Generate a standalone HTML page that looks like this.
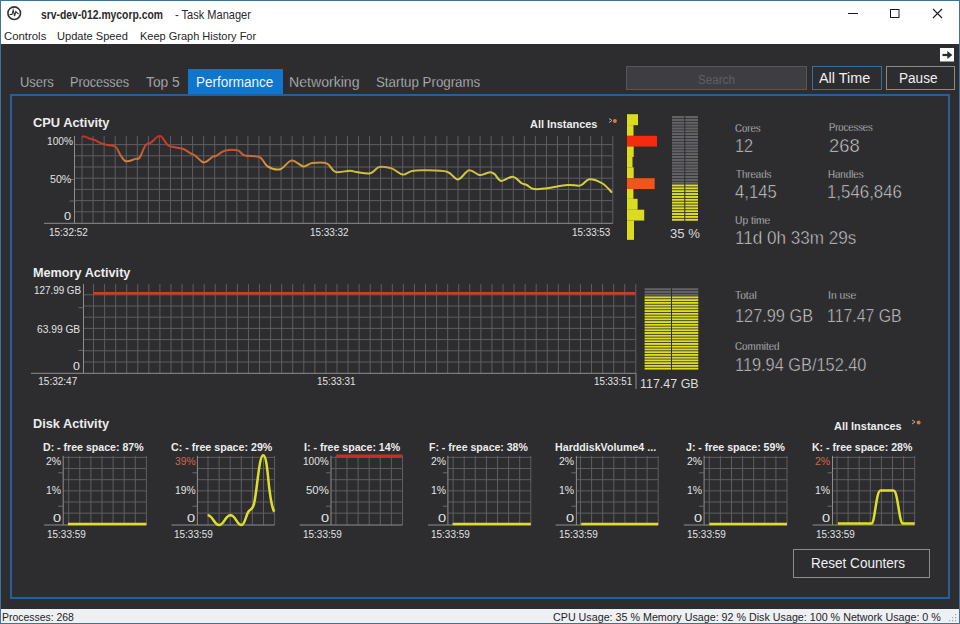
<!DOCTYPE html>
<html><head><meta charset="utf-8"><style>
html,body{margin:0;padding:0;width:960px;height:624px;overflow:hidden;background:#2d2d30;}
.t{position:absolute;white-space:pre;font-family:"Liberation Sans", sans-serif;transform-origin:0 0;}
.abs{position:absolute;}
</style></head><body>
<div class="abs" style="left:0;top:0;width:960px;height:44px;background:#ffffff"></div>
<div class="abs" style="left:0;top:609px;width:960px;height:15px;background:#eef0f3"></div>
<div class="abs" style="left:188px;top:68.5px;width:94.5px;height:27px;background:#0e76cc"></div>
<div class="abs" style="left:10px;top:94px;width:936px;height:501px;border:2px solid #23609c"></div>
<div class="abs" style="left:625.5px;top:65.5px;width:179.5px;height:22px;background:#3e3e42;border:1px solid #58585c"></div>
<div class="abs" style="left:812px;top:66px;width:68px;height:22px;border:1px solid #3b6d9a"></div>
<div class="abs" style="left:886px;top:66px;width:67px;height:22px;border:1px solid #8a8a8a"></div>
<div class="abs" style="left:792.5px;top:549px;width:135.5px;height:27px;border:1px solid #8c8c8c"></div>
<div class="abs" style="left:0;top:0;width:958px;height:622px;border:1px solid #40729c"></div>
<svg width="960" height="624" style="position:absolute;left:0;top:0">
<line x1="612.80" y1="136.00" x2="612.80" y2="223.30" stroke="#5e5e62" stroke-width="1"/><line x1="601.74" y1="136.00" x2="601.74" y2="223.30" stroke="#5e5e62" stroke-width="1"/><line x1="590.68" y1="136.00" x2="590.68" y2="223.30" stroke="#5e5e62" stroke-width="1"/><line x1="579.63" y1="136.00" x2="579.63" y2="223.30" stroke="#5e5e62" stroke-width="1"/><line x1="568.57" y1="136.00" x2="568.57" y2="223.30" stroke="#5e5e62" stroke-width="1"/><line x1="557.51" y1="136.00" x2="557.51" y2="223.30" stroke="#5e5e62" stroke-width="1"/><line x1="546.45" y1="136.00" x2="546.45" y2="223.30" stroke="#5e5e62" stroke-width="1"/><line x1="535.39" y1="136.00" x2="535.39" y2="223.30" stroke="#5e5e62" stroke-width="1"/><line x1="524.34" y1="136.00" x2="524.34" y2="223.30" stroke="#5e5e62" stroke-width="1"/><line x1="513.28" y1="136.00" x2="513.28" y2="223.30" stroke="#5e5e62" stroke-width="1"/><line x1="502.22" y1="136.00" x2="502.22" y2="223.30" stroke="#5e5e62" stroke-width="1"/><line x1="491.16" y1="136.00" x2="491.16" y2="223.30" stroke="#5e5e62" stroke-width="1"/><line x1="480.10" y1="136.00" x2="480.10" y2="223.30" stroke="#5e5e62" stroke-width="1"/><line x1="469.05" y1="136.00" x2="469.05" y2="223.30" stroke="#5e5e62" stroke-width="1"/><line x1="457.99" y1="136.00" x2="457.99" y2="223.30" stroke="#5e5e62" stroke-width="1"/><line x1="446.93" y1="136.00" x2="446.93" y2="223.30" stroke="#5e5e62" stroke-width="1"/><line x1="435.87" y1="136.00" x2="435.87" y2="223.30" stroke="#5e5e62" stroke-width="1"/><line x1="424.81" y1="136.00" x2="424.81" y2="223.30" stroke="#5e5e62" stroke-width="1"/><line x1="413.76" y1="136.00" x2="413.76" y2="223.30" stroke="#5e5e62" stroke-width="1"/><line x1="402.70" y1="136.00" x2="402.70" y2="223.30" stroke="#5e5e62" stroke-width="1"/><line x1="391.64" y1="136.00" x2="391.64" y2="223.30" stroke="#5e5e62" stroke-width="1"/><line x1="380.58" y1="136.00" x2="380.58" y2="223.30" stroke="#5e5e62" stroke-width="1"/><line x1="369.52" y1="136.00" x2="369.52" y2="223.30" stroke="#5e5e62" stroke-width="1"/><line x1="358.47" y1="136.00" x2="358.47" y2="223.30" stroke="#5e5e62" stroke-width="1"/><line x1="347.41" y1="136.00" x2="347.41" y2="223.30" stroke="#5e5e62" stroke-width="1"/><line x1="336.35" y1="136.00" x2="336.35" y2="223.30" stroke="#5e5e62" stroke-width="1"/><line x1="325.29" y1="136.00" x2="325.29" y2="223.30" stroke="#5e5e62" stroke-width="1"/><line x1="314.23" y1="136.00" x2="314.23" y2="223.30" stroke="#5e5e62" stroke-width="1"/><line x1="303.18" y1="136.00" x2="303.18" y2="223.30" stroke="#5e5e62" stroke-width="1"/><line x1="292.12" y1="136.00" x2="292.12" y2="223.30" stroke="#5e5e62" stroke-width="1"/><line x1="281.06" y1="136.00" x2="281.06" y2="223.30" stroke="#5e5e62" stroke-width="1"/><line x1="270.00" y1="136.00" x2="270.00" y2="223.30" stroke="#5e5e62" stroke-width="1"/><line x1="258.94" y1="136.00" x2="258.94" y2="223.30" stroke="#5e5e62" stroke-width="1"/><line x1="247.89" y1="136.00" x2="247.89" y2="223.30" stroke="#5e5e62" stroke-width="1"/><line x1="236.83" y1="136.00" x2="236.83" y2="223.30" stroke="#5e5e62" stroke-width="1"/><line x1="225.77" y1="136.00" x2="225.77" y2="223.30" stroke="#5e5e62" stroke-width="1"/><line x1="214.71" y1="136.00" x2="214.71" y2="223.30" stroke="#5e5e62" stroke-width="1"/><line x1="203.65" y1="136.00" x2="203.65" y2="223.30" stroke="#5e5e62" stroke-width="1"/><line x1="192.60" y1="136.00" x2="192.60" y2="223.30" stroke="#5e5e62" stroke-width="1"/><line x1="181.54" y1="136.00" x2="181.54" y2="223.30" stroke="#5e5e62" stroke-width="1"/><line x1="170.48" y1="136.00" x2="170.48" y2="223.30" stroke="#5e5e62" stroke-width="1"/><line x1="159.42" y1="136.00" x2="159.42" y2="223.30" stroke="#5e5e62" stroke-width="1"/><line x1="148.36" y1="136.00" x2="148.36" y2="223.30" stroke="#5e5e62" stroke-width="1"/><line x1="137.31" y1="136.00" x2="137.31" y2="223.30" stroke="#5e5e62" stroke-width="1"/><line x1="126.25" y1="136.00" x2="126.25" y2="223.30" stroke="#5e5e62" stroke-width="1"/><line x1="115.19" y1="136.00" x2="115.19" y2="223.30" stroke="#5e5e62" stroke-width="1"/><line x1="104.13" y1="136.00" x2="104.13" y2="223.30" stroke="#5e5e62" stroke-width="1"/><line x1="93.07" y1="136.00" x2="93.07" y2="223.30" stroke="#5e5e62" stroke-width="1"/><line x1="82.02" y1="136.00" x2="82.02" y2="223.30" stroke="#5e5e62" stroke-width="1"/><line x1="74.50" y1="211.80" x2="612.80" y2="211.80" stroke="#5e5e62" stroke-width="1"/><line x1="74.50" y1="200.60" x2="612.80" y2="200.60" stroke="#5e5e62" stroke-width="1"/><line x1="74.50" y1="189.40" x2="612.80" y2="189.40" stroke="#5e5e62" stroke-width="1"/><line x1="74.50" y1="178.20" x2="612.80" y2="178.20" stroke="#5e5e62" stroke-width="1"/><line x1="74.50" y1="167.00" x2="612.80" y2="167.00" stroke="#5e5e62" stroke-width="1"/><line x1="74.50" y1="155.80" x2="612.80" y2="155.80" stroke="#5e5e62" stroke-width="1"/><line x1="74.50" y1="144.60" x2="612.80" y2="144.60" stroke="#5e5e62" stroke-width="1"/><line x1="74.50" y1="136.00" x2="74.50" y2="223.30" stroke="#8e8e8e" stroke-width="1"/><line x1="44.00" y1="223.30" x2="612.80" y2="223.30" stroke="#8e8e8e" stroke-width="1"/><line x1="69.50" y1="179.50" x2="74.50" y2="179.50" stroke="#6a6a6a" stroke-width="1"/><line x1="69.50" y1="201.00" x2="74.50" y2="201.00" stroke="#6a6a6a" stroke-width="1"/><line x1="635.80" y1="284.00" x2="635.80" y2="373.30" stroke="#5e5e62" stroke-width="1"/><line x1="624.73" y1="284.00" x2="624.73" y2="373.30" stroke="#5e5e62" stroke-width="1"/><line x1="613.67" y1="284.00" x2="613.67" y2="373.30" stroke="#5e5e62" stroke-width="1"/><line x1="602.60" y1="284.00" x2="602.60" y2="373.30" stroke="#5e5e62" stroke-width="1"/><line x1="591.53" y1="284.00" x2="591.53" y2="373.30" stroke="#5e5e62" stroke-width="1"/><line x1="580.46" y1="284.00" x2="580.46" y2="373.30" stroke="#5e5e62" stroke-width="1"/><line x1="569.40" y1="284.00" x2="569.40" y2="373.30" stroke="#5e5e62" stroke-width="1"/><line x1="558.33" y1="284.00" x2="558.33" y2="373.30" stroke="#5e5e62" stroke-width="1"/><line x1="547.26" y1="284.00" x2="547.26" y2="373.30" stroke="#5e5e62" stroke-width="1"/><line x1="536.20" y1="284.00" x2="536.20" y2="373.30" stroke="#5e5e62" stroke-width="1"/><line x1="525.13" y1="284.00" x2="525.13" y2="373.30" stroke="#5e5e62" stroke-width="1"/><line x1="514.06" y1="284.00" x2="514.06" y2="373.30" stroke="#5e5e62" stroke-width="1"/><line x1="503.00" y1="284.00" x2="503.00" y2="373.30" stroke="#5e5e62" stroke-width="1"/><line x1="491.93" y1="284.00" x2="491.93" y2="373.30" stroke="#5e5e62" stroke-width="1"/><line x1="480.86" y1="284.00" x2="480.86" y2="373.30" stroke="#5e5e62" stroke-width="1"/><line x1="469.79" y1="284.00" x2="469.79" y2="373.30" stroke="#5e5e62" stroke-width="1"/><line x1="458.73" y1="284.00" x2="458.73" y2="373.30" stroke="#5e5e62" stroke-width="1"/><line x1="447.66" y1="284.00" x2="447.66" y2="373.30" stroke="#5e5e62" stroke-width="1"/><line x1="436.59" y1="284.00" x2="436.59" y2="373.30" stroke="#5e5e62" stroke-width="1"/><line x1="425.53" y1="284.00" x2="425.53" y2="373.30" stroke="#5e5e62" stroke-width="1"/><line x1="414.46" y1="284.00" x2="414.46" y2="373.30" stroke="#5e5e62" stroke-width="1"/><line x1="403.39" y1="284.00" x2="403.39" y2="373.30" stroke="#5e5e62" stroke-width="1"/><line x1="392.33" y1="284.00" x2="392.33" y2="373.30" stroke="#5e5e62" stroke-width="1"/><line x1="381.26" y1="284.00" x2="381.26" y2="373.30" stroke="#5e5e62" stroke-width="1"/><line x1="370.19" y1="284.00" x2="370.19" y2="373.30" stroke="#5e5e62" stroke-width="1"/><line x1="359.12" y1="284.00" x2="359.12" y2="373.30" stroke="#5e5e62" stroke-width="1"/><line x1="348.06" y1="284.00" x2="348.06" y2="373.30" stroke="#5e5e62" stroke-width="1"/><line x1="336.99" y1="284.00" x2="336.99" y2="373.30" stroke="#5e5e62" stroke-width="1"/><line x1="325.92" y1="284.00" x2="325.92" y2="373.30" stroke="#5e5e62" stroke-width="1"/><line x1="314.86" y1="284.00" x2="314.86" y2="373.30" stroke="#5e5e62" stroke-width="1"/><line x1="303.79" y1="284.00" x2="303.79" y2="373.30" stroke="#5e5e62" stroke-width="1"/><line x1="292.72" y1="284.00" x2="292.72" y2="373.30" stroke="#5e5e62" stroke-width="1"/><line x1="281.66" y1="284.00" x2="281.66" y2="373.30" stroke="#5e5e62" stroke-width="1"/><line x1="270.59" y1="284.00" x2="270.59" y2="373.30" stroke="#5e5e62" stroke-width="1"/><line x1="259.52" y1="284.00" x2="259.52" y2="373.30" stroke="#5e5e62" stroke-width="1"/><line x1="248.45" y1="284.00" x2="248.45" y2="373.30" stroke="#5e5e62" stroke-width="1"/><line x1="237.39" y1="284.00" x2="237.39" y2="373.30" stroke="#5e5e62" stroke-width="1"/><line x1="226.32" y1="284.00" x2="226.32" y2="373.30" stroke="#5e5e62" stroke-width="1"/><line x1="215.25" y1="284.00" x2="215.25" y2="373.30" stroke="#5e5e62" stroke-width="1"/><line x1="204.19" y1="284.00" x2="204.19" y2="373.30" stroke="#5e5e62" stroke-width="1"/><line x1="193.12" y1="284.00" x2="193.12" y2="373.30" stroke="#5e5e62" stroke-width="1"/><line x1="182.05" y1="284.00" x2="182.05" y2="373.30" stroke="#5e5e62" stroke-width="1"/><line x1="170.99" y1="284.00" x2="170.99" y2="373.30" stroke="#5e5e62" stroke-width="1"/><line x1="159.92" y1="284.00" x2="159.92" y2="373.30" stroke="#5e5e62" stroke-width="1"/><line x1="148.85" y1="284.00" x2="148.85" y2="373.30" stroke="#5e5e62" stroke-width="1"/><line x1="137.78" y1="284.00" x2="137.78" y2="373.30" stroke="#5e5e62" stroke-width="1"/><line x1="126.72" y1="284.00" x2="126.72" y2="373.30" stroke="#5e5e62" stroke-width="1"/><line x1="115.65" y1="284.00" x2="115.65" y2="373.30" stroke="#5e5e62" stroke-width="1"/><line x1="104.58" y1="284.00" x2="104.58" y2="373.30" stroke="#5e5e62" stroke-width="1"/><line x1="93.52" y1="284.00" x2="93.52" y2="373.30" stroke="#5e5e62" stroke-width="1"/><line x1="83.50" y1="362.00" x2="635.80" y2="362.00" stroke="#5e5e62" stroke-width="1"/><line x1="83.50" y1="350.80" x2="635.80" y2="350.80" stroke="#5e5e62" stroke-width="1"/><line x1="83.50" y1="339.60" x2="635.80" y2="339.60" stroke="#5e5e62" stroke-width="1"/><line x1="83.50" y1="328.40" x2="635.80" y2="328.40" stroke="#5e5e62" stroke-width="1"/><line x1="83.50" y1="317.20" x2="635.80" y2="317.20" stroke="#5e5e62" stroke-width="1"/><line x1="83.50" y1="306.00" x2="635.80" y2="306.00" stroke="#5e5e62" stroke-width="1"/><line x1="83.50" y1="294.80" x2="635.80" y2="294.80" stroke="#5e5e62" stroke-width="1"/><line x1="83.50" y1="284.00" x2="83.50" y2="373.30" stroke="#8e8e8e" stroke-width="1"/><line x1="31.00" y1="373.30" x2="635.80" y2="373.30" stroke="#8e8e8e" stroke-width="1"/><line x1="78.50" y1="307.70" x2="83.50" y2="307.70" stroke="#6a6a6a" stroke-width="1"/><line x1="78.50" y1="350.40" x2="83.50" y2="350.40" stroke="#6a6a6a" stroke-width="1"/><line x1="636.00" y1="373.00" x2="636.00" y2="389.00" stroke="#8e8e8e" stroke-width="1"/><line x1="146.40" y1="455.80" x2="146.40" y2="525.00" stroke="#5e5e62" stroke-width="1"/><line x1="135.30" y1="455.80" x2="135.30" y2="525.00" stroke="#5e5e62" stroke-width="1"/><line x1="124.20" y1="455.80" x2="124.20" y2="525.00" stroke="#5e5e62" stroke-width="1"/><line x1="113.10" y1="455.80" x2="113.10" y2="525.00" stroke="#5e5e62" stroke-width="1"/><line x1="102.00" y1="455.80" x2="102.00" y2="525.00" stroke="#5e5e62" stroke-width="1"/><line x1="90.90" y1="455.80" x2="90.90" y2="525.00" stroke="#5e5e62" stroke-width="1"/><line x1="79.80" y1="455.80" x2="79.80" y2="525.00" stroke="#5e5e62" stroke-width="1"/><line x1="68.70" y1="455.80" x2="68.70" y2="525.00" stroke="#5e5e62" stroke-width="1"/><line x1="63.20" y1="457.40" x2="146.40" y2="457.40" stroke="#5e5e62" stroke-width="1"/><line x1="63.20" y1="468.55" x2="146.40" y2="468.55" stroke="#5e5e62" stroke-width="1"/><line x1="63.20" y1="479.70" x2="146.40" y2="479.70" stroke="#5e5e62" stroke-width="1"/><line x1="63.20" y1="490.85" x2="146.40" y2="490.85" stroke="#5e5e62" stroke-width="1"/><line x1="63.20" y1="502.00" x2="146.40" y2="502.00" stroke="#5e5e62" stroke-width="1"/><line x1="63.20" y1="513.15" x2="146.40" y2="513.15" stroke="#5e5e62" stroke-width="1"/><line x1="63.20" y1="455.80" x2="63.20" y2="525.00" stroke="#8e8e8e" stroke-width="1"/><line x1="44.10" y1="525.00" x2="146.40" y2="525.00" stroke="#8e8e8e" stroke-width="1"/><line x1="58.20" y1="472.80" x2="63.20" y2="472.80" stroke="#6a6a6a" stroke-width="1"/><line x1="58.20" y1="506.20" x2="63.20" y2="506.20" stroke="#6a6a6a" stroke-width="1"/><line x1="274.60" y1="455.80" x2="274.60" y2="525.00" stroke="#5e5e62" stroke-width="1"/><line x1="263.50" y1="455.80" x2="263.50" y2="525.00" stroke="#5e5e62" stroke-width="1"/><line x1="252.40" y1="455.80" x2="252.40" y2="525.00" stroke="#5e5e62" stroke-width="1"/><line x1="241.30" y1="455.80" x2="241.30" y2="525.00" stroke="#5e5e62" stroke-width="1"/><line x1="230.20" y1="455.80" x2="230.20" y2="525.00" stroke="#5e5e62" stroke-width="1"/><line x1="219.10" y1="455.80" x2="219.10" y2="525.00" stroke="#5e5e62" stroke-width="1"/><line x1="208.00" y1="455.80" x2="208.00" y2="525.00" stroke="#5e5e62" stroke-width="1"/><line x1="197.40" y1="457.40" x2="274.60" y2="457.40" stroke="#5e5e62" stroke-width="1"/><line x1="197.40" y1="468.55" x2="274.60" y2="468.55" stroke="#5e5e62" stroke-width="1"/><line x1="197.40" y1="479.70" x2="274.60" y2="479.70" stroke="#5e5e62" stroke-width="1"/><line x1="197.40" y1="490.85" x2="274.60" y2="490.85" stroke="#5e5e62" stroke-width="1"/><line x1="197.40" y1="502.00" x2="274.60" y2="502.00" stroke="#5e5e62" stroke-width="1"/><line x1="197.40" y1="513.15" x2="274.60" y2="513.15" stroke="#5e5e62" stroke-width="1"/><line x1="197.40" y1="455.80" x2="197.40" y2="525.00" stroke="#8e8e8e" stroke-width="1"/><line x1="171.50" y1="525.00" x2="274.60" y2="525.00" stroke="#8e8e8e" stroke-width="1"/><line x1="192.40" y1="472.80" x2="197.40" y2="472.80" stroke="#6a6a6a" stroke-width="1"/><line x1="192.40" y1="506.20" x2="197.40" y2="506.20" stroke="#6a6a6a" stroke-width="1"/><line x1="402.50" y1="455.80" x2="402.50" y2="525.00" stroke="#5e5e62" stroke-width="1"/><line x1="391.40" y1="455.80" x2="391.40" y2="525.00" stroke="#5e5e62" stroke-width="1"/><line x1="380.30" y1="455.80" x2="380.30" y2="525.00" stroke="#5e5e62" stroke-width="1"/><line x1="369.20" y1="455.80" x2="369.20" y2="525.00" stroke="#5e5e62" stroke-width="1"/><line x1="358.10" y1="455.80" x2="358.10" y2="525.00" stroke="#5e5e62" stroke-width="1"/><line x1="347.00" y1="455.80" x2="347.00" y2="525.00" stroke="#5e5e62" stroke-width="1"/><line x1="335.90" y1="455.80" x2="335.90" y2="525.00" stroke="#5e5e62" stroke-width="1"/><line x1="331.00" y1="457.40" x2="402.50" y2="457.40" stroke="#5e5e62" stroke-width="1"/><line x1="331.00" y1="468.55" x2="402.50" y2="468.55" stroke="#5e5e62" stroke-width="1"/><line x1="331.00" y1="479.70" x2="402.50" y2="479.70" stroke="#5e5e62" stroke-width="1"/><line x1="331.00" y1="490.85" x2="402.50" y2="490.85" stroke="#5e5e62" stroke-width="1"/><line x1="331.00" y1="502.00" x2="402.50" y2="502.00" stroke="#5e5e62" stroke-width="1"/><line x1="331.00" y1="513.15" x2="402.50" y2="513.15" stroke="#5e5e62" stroke-width="1"/><line x1="331.00" y1="455.80" x2="331.00" y2="525.00" stroke="#8e8e8e" stroke-width="1"/><line x1="299.70" y1="525.00" x2="402.50" y2="525.00" stroke="#8e8e8e" stroke-width="1"/><line x1="326.00" y1="472.80" x2="331.00" y2="472.80" stroke="#6a6a6a" stroke-width="1"/><line x1="326.00" y1="506.20" x2="331.00" y2="506.20" stroke="#6a6a6a" stroke-width="1"/><line x1="530.80" y1="455.80" x2="530.80" y2="525.00" stroke="#5e5e62" stroke-width="1"/><line x1="519.70" y1="455.80" x2="519.70" y2="525.00" stroke="#5e5e62" stroke-width="1"/><line x1="508.60" y1="455.80" x2="508.60" y2="525.00" stroke="#5e5e62" stroke-width="1"/><line x1="497.50" y1="455.80" x2="497.50" y2="525.00" stroke="#5e5e62" stroke-width="1"/><line x1="486.40" y1="455.80" x2="486.40" y2="525.00" stroke="#5e5e62" stroke-width="1"/><line x1="475.30" y1="455.80" x2="475.30" y2="525.00" stroke="#5e5e62" stroke-width="1"/><line x1="464.20" y1="455.80" x2="464.20" y2="525.00" stroke="#5e5e62" stroke-width="1"/><line x1="453.10" y1="455.80" x2="453.10" y2="525.00" stroke="#5e5e62" stroke-width="1"/><line x1="447.90" y1="457.40" x2="530.80" y2="457.40" stroke="#5e5e62" stroke-width="1"/><line x1="447.90" y1="468.55" x2="530.80" y2="468.55" stroke="#5e5e62" stroke-width="1"/><line x1="447.90" y1="479.70" x2="530.80" y2="479.70" stroke="#5e5e62" stroke-width="1"/><line x1="447.90" y1="490.85" x2="530.80" y2="490.85" stroke="#5e5e62" stroke-width="1"/><line x1="447.90" y1="502.00" x2="530.80" y2="502.00" stroke="#5e5e62" stroke-width="1"/><line x1="447.90" y1="513.15" x2="530.80" y2="513.15" stroke="#5e5e62" stroke-width="1"/><line x1="447.90" y1="455.80" x2="447.90" y2="525.00" stroke="#8e8e8e" stroke-width="1"/><line x1="428.00" y1="525.00" x2="530.80" y2="525.00" stroke="#8e8e8e" stroke-width="1"/><line x1="442.90" y1="472.80" x2="447.90" y2="472.80" stroke="#6a6a6a" stroke-width="1"/><line x1="442.90" y1="506.20" x2="447.90" y2="506.20" stroke="#6a6a6a" stroke-width="1"/><line x1="658.20" y1="455.80" x2="658.20" y2="525.00" stroke="#5e5e62" stroke-width="1"/><line x1="647.10" y1="455.80" x2="647.10" y2="525.00" stroke="#5e5e62" stroke-width="1"/><line x1="636.00" y1="455.80" x2="636.00" y2="525.00" stroke="#5e5e62" stroke-width="1"/><line x1="624.90" y1="455.80" x2="624.90" y2="525.00" stroke="#5e5e62" stroke-width="1"/><line x1="613.80" y1="455.80" x2="613.80" y2="525.00" stroke="#5e5e62" stroke-width="1"/><line x1="602.70" y1="455.80" x2="602.70" y2="525.00" stroke="#5e5e62" stroke-width="1"/><line x1="591.60" y1="455.80" x2="591.60" y2="525.00" stroke="#5e5e62" stroke-width="1"/><line x1="580.50" y1="455.80" x2="580.50" y2="525.00" stroke="#5e5e62" stroke-width="1"/><line x1="576.40" y1="457.40" x2="658.20" y2="457.40" stroke="#5e5e62" stroke-width="1"/><line x1="576.40" y1="468.55" x2="658.20" y2="468.55" stroke="#5e5e62" stroke-width="1"/><line x1="576.40" y1="479.70" x2="658.20" y2="479.70" stroke="#5e5e62" stroke-width="1"/><line x1="576.40" y1="490.85" x2="658.20" y2="490.85" stroke="#5e5e62" stroke-width="1"/><line x1="576.40" y1="502.00" x2="658.20" y2="502.00" stroke="#5e5e62" stroke-width="1"/><line x1="576.40" y1="513.15" x2="658.20" y2="513.15" stroke="#5e5e62" stroke-width="1"/><line x1="576.40" y1="455.80" x2="576.40" y2="525.00" stroke="#8e8e8e" stroke-width="1"/><line x1="555.60" y1="525.00" x2="658.20" y2="525.00" stroke="#8e8e8e" stroke-width="1"/><line x1="571.40" y1="472.80" x2="576.40" y2="472.80" stroke="#6a6a6a" stroke-width="1"/><line x1="571.40" y1="506.20" x2="576.40" y2="506.20" stroke="#6a6a6a" stroke-width="1"/><line x1="787.00" y1="455.80" x2="787.00" y2="525.00" stroke="#5e5e62" stroke-width="1"/><line x1="775.90" y1="455.80" x2="775.90" y2="525.00" stroke="#5e5e62" stroke-width="1"/><line x1="764.80" y1="455.80" x2="764.80" y2="525.00" stroke="#5e5e62" stroke-width="1"/><line x1="753.70" y1="455.80" x2="753.70" y2="525.00" stroke="#5e5e62" stroke-width="1"/><line x1="742.60" y1="455.80" x2="742.60" y2="525.00" stroke="#5e5e62" stroke-width="1"/><line x1="731.50" y1="455.80" x2="731.50" y2="525.00" stroke="#5e5e62" stroke-width="1"/><line x1="720.40" y1="455.80" x2="720.40" y2="525.00" stroke="#5e5e62" stroke-width="1"/><line x1="709.30" y1="455.80" x2="709.30" y2="525.00" stroke="#5e5e62" stroke-width="1"/><line x1="704.10" y1="457.40" x2="787.00" y2="457.40" stroke="#5e5e62" stroke-width="1"/><line x1="704.10" y1="468.55" x2="787.00" y2="468.55" stroke="#5e5e62" stroke-width="1"/><line x1="704.10" y1="479.70" x2="787.00" y2="479.70" stroke="#5e5e62" stroke-width="1"/><line x1="704.10" y1="490.85" x2="787.00" y2="490.85" stroke="#5e5e62" stroke-width="1"/><line x1="704.10" y1="502.00" x2="787.00" y2="502.00" stroke="#5e5e62" stroke-width="1"/><line x1="704.10" y1="513.15" x2="787.00" y2="513.15" stroke="#5e5e62" stroke-width="1"/><line x1="704.10" y1="455.80" x2="704.10" y2="525.00" stroke="#8e8e8e" stroke-width="1"/><line x1="683.80" y1="525.00" x2="787.00" y2="525.00" stroke="#8e8e8e" stroke-width="1"/><line x1="699.10" y1="472.80" x2="704.10" y2="472.80" stroke="#6a6a6a" stroke-width="1"/><line x1="699.10" y1="506.20" x2="704.10" y2="506.20" stroke="#6a6a6a" stroke-width="1"/><line x1="914.70" y1="455.80" x2="914.70" y2="525.00" stroke="#5e5e62" stroke-width="1"/><line x1="903.60" y1="455.80" x2="903.60" y2="525.00" stroke="#5e5e62" stroke-width="1"/><line x1="892.50" y1="455.80" x2="892.50" y2="525.00" stroke="#5e5e62" stroke-width="1"/><line x1="881.40" y1="455.80" x2="881.40" y2="525.00" stroke="#5e5e62" stroke-width="1"/><line x1="870.30" y1="455.80" x2="870.30" y2="525.00" stroke="#5e5e62" stroke-width="1"/><line x1="859.20" y1="455.80" x2="859.20" y2="525.00" stroke="#5e5e62" stroke-width="1"/><line x1="848.10" y1="455.80" x2="848.10" y2="525.00" stroke="#5e5e62" stroke-width="1"/><line x1="837.00" y1="455.80" x2="837.00" y2="525.00" stroke="#5e5e62" stroke-width="1"/><line x1="832.50" y1="457.40" x2="914.70" y2="457.40" stroke="#5e5e62" stroke-width="1"/><line x1="832.50" y1="468.55" x2="914.70" y2="468.55" stroke="#5e5e62" stroke-width="1"/><line x1="832.50" y1="479.70" x2="914.70" y2="479.70" stroke="#5e5e62" stroke-width="1"/><line x1="832.50" y1="490.85" x2="914.70" y2="490.85" stroke="#5e5e62" stroke-width="1"/><line x1="832.50" y1="502.00" x2="914.70" y2="502.00" stroke="#5e5e62" stroke-width="1"/><line x1="832.50" y1="513.15" x2="914.70" y2="513.15" stroke="#5e5e62" stroke-width="1"/><line x1="832.50" y1="455.80" x2="832.50" y2="525.00" stroke="#8e8e8e" stroke-width="1"/><line x1="812.60" y1="525.00" x2="914.70" y2="525.00" stroke="#8e8e8e" stroke-width="1"/><line x1="827.50" y1="472.80" x2="832.50" y2="472.80" stroke="#6a6a6a" stroke-width="1"/><line x1="827.50" y1="506.20" x2="832.50" y2="506.20" stroke="#6a6a6a" stroke-width="1"/><defs><linearGradient id="cg" gradientUnits="userSpaceOnUse" x1="0" y1="136" x2="0" y2="180"><stop offset="0" stop-color="#c82e28"/><stop offset="0.25" stop-color="#ca442c"/><stop offset="0.545" stop-color="#d07a36"/><stop offset="0.68" stop-color="#d2a03a"/><stop offset="0.82" stop-color="#d0c03e"/><stop offset="1" stop-color="#d2cf3e"/></linearGradient></defs><path d="M82.00,136.60 C82.48,136.60 83.57,136.24 84.90,136.60 C86.23,136.96 88.42,138.20 90.00,138.75 C91.58,139.30 92.45,139.12 94.40,139.90 C96.35,140.68 99.52,142.55 101.70,143.40 C103.88,144.25 105.18,144.43 107.50,145.00 C109.82,145.57 113.40,145.05 115.60,146.80 C117.80,148.55 119.13,153.15 120.70,155.50 C122.27,157.85 123.55,160.00 125.00,160.90 C126.45,161.80 127.69,161.23 129.40,160.90 C131.11,160.57 133.55,159.43 135.25,158.90 C136.95,158.37 137.89,159.97 139.60,157.70 C141.31,155.43 143.55,147.85 145.50,145.30 C147.45,142.75 149.37,143.78 151.30,142.40 C153.23,141.02 155.40,137.97 157.10,137.00 C158.80,136.03 159.68,135.22 161.50,136.60 C163.32,137.98 165.58,143.48 168.00,145.30 C170.42,147.12 173.43,146.88 176.00,147.50 C178.57,148.12 180.95,148.03 183.40,149.00 C185.85,149.97 188.77,152.22 190.70,153.30 C192.63,154.38 193.07,154.08 195.00,155.50 C196.93,156.92 200.35,160.82 202.30,161.80 C204.25,162.78 204.87,162.33 206.70,161.40 C208.53,160.47 211.78,157.13 213.30,156.25 C214.82,155.37 213.92,157.02 215.80,156.10 C217.68,155.18 220.95,151.72 224.60,150.75 C228.25,149.78 234.42,149.53 237.70,150.30 C240.98,151.08 240.65,154.25 244.30,155.40 C247.95,156.55 255.72,155.37 259.60,157.20 C263.48,159.03 264.20,164.38 267.60,166.40 C271.00,168.42 275.98,170.28 280.00,169.30 C284.02,168.32 287.82,160.98 291.70,160.50 C295.58,160.02 299.90,165.97 303.30,166.40 C306.70,166.83 308.20,163.60 312.10,163.10 C316.00,162.60 322.82,161.93 326.70,163.40 C330.58,164.87 331.52,170.68 335.40,171.90 C339.28,173.12 346.45,170.67 350.00,170.70 C353.55,170.73 353.28,171.67 356.70,172.10 C360.12,172.53 366.73,174.10 370.50,173.25 C374.27,172.40 375.77,167.81 379.30,167.00 C382.83,166.19 387.82,167.13 391.70,168.40 C395.58,169.67 399.20,174.18 402.60,174.60 C406.00,175.02 408.33,171.62 412.10,170.90 C415.87,170.18 419.37,170.15 425.20,170.30 C431.03,170.45 441.63,170.28 447.10,171.80 C452.57,173.32 454.35,179.65 458.00,179.40 C461.65,179.15 465.47,171.03 469.00,170.30 C472.53,169.57 476.53,174.42 479.20,175.00 C481.87,175.58 483.17,174.27 485.00,173.80 C486.83,173.33 488.60,172.15 490.20,172.20 C491.80,172.25 492.78,172.65 494.60,174.10 C496.42,175.55 498.07,180.47 501.10,180.90 C504.13,181.33 509.38,176.31 512.80,176.70 C516.22,177.09 519.28,181.87 521.60,183.25 C523.92,184.63 524.63,184.03 526.70,185.00 C528.77,185.97 530.60,188.57 534.00,189.10 C537.40,189.63 541.52,188.88 547.10,188.20 C552.68,187.52 561.92,185.47 567.50,185.00 C573.08,184.53 576.95,186.37 580.60,185.40 C584.25,184.43 585.75,179.52 589.40,179.20 C593.05,178.88 598.73,181.27 602.50,183.50 C606.27,185.73 610.42,191.08 612.00,192.60" fill="none" stroke="url(#cg)" stroke-width="2" stroke-linejoin="round"/><line x1="93.00" y1="293.20" x2="635.50" y2="293.20" stroke="#d23a22" stroke-width="2.6"/><line x1="67.90" y1="524.00" x2="146.40" y2="524.00" stroke="#dede2a" stroke-width="2.5"/><path d="M207.6,515.2 C213,515.2 214,525 219.1,525 C224.5,525 225,515.2 230.5,515.2 C236,515.2 236.5,525 241.5,525 C245,525 246,514 249,511 C251,509 252.5,509.5 254,504 C257,492 259,455.3 263.2,455.3 C267,455.3 268,480 269.5,490 C271,502 272.5,509 274.3,511.7" fill="none" stroke="#dede2a" stroke-width="2.5"/><line x1="336.20" y1="455.70" x2="402.50" y2="455.70" stroke="#cc2c26" stroke-width="2.5"/><line x1="452.60" y1="524.00" x2="530.80" y2="524.00" stroke="#dede2a" stroke-width="2.5"/><line x1="581.20" y1="524.00" x2="658.20" y2="524.00" stroke="#dede2a" stroke-width="2.5"/><line x1="709.40" y1="524.00" x2="787.00" y2="524.00" stroke="#dede2a" stroke-width="2.5"/><path d="M837.9,523.6 L871.4,523.6 C875,523.6 876,490.5 880.5,490.5 L893.5,490.5 C898,490.5 899,523.6 903,523.6 L914.7,523.6" fill="none" stroke="#dede2a" stroke-width="2.5"/><rect x="627.00" y="114.20" width="11.00" height="10.95" fill="#dcdc1e" /><rect x="627.00" y="125.10" width="6.50" height="10.75" fill="#dcdc1e" /><rect x="627.00" y="135.80" width="30.00" height="10.75" fill="#f42b0c" /><rect x="627.00" y="146.50" width="6.70" height="10.45" fill="#dcdc1e" /><rect x="627.00" y="156.90" width="5.50" height="10.45" fill="#dcdc1e" /><rect x="627.00" y="167.30" width="6.70" height="10.95" fill="#dcdc1e" /><rect x="627.00" y="178.20" width="27.70" height="10.85" fill="#f0561a" /><rect x="627.00" y="189.00" width="6.40" height="9.85" fill="#dcdc1e" /><rect x="627.00" y="198.80" width="10.60" height="10.95" fill="#dcdc1e" /><rect x="627.00" y="209.70" width="17.20" height="10.85" fill="#dcdc1e" /><rect x="627.00" y="220.50" width="7.00" height="19.35" fill="#dcdc1e" /><rect x="672.00" y="218.75" width="12.30" height="2.00" fill="#dddd22" /><rect x="685.30" y="218.75" width="12.70" height="2.00" fill="#dddd22" /><rect x="672.00" y="215.89" width="12.30" height="2.00" fill="#dddd22" /><rect x="685.30" y="215.89" width="12.70" height="2.00" fill="#dddd22" /><rect x="672.00" y="213.04" width="12.30" height="2.00" fill="#dddd22" /><rect x="685.30" y="213.04" width="12.70" height="2.00" fill="#dddd22" /><rect x="672.00" y="210.18" width="12.30" height="2.00" fill="#dddd22" /><rect x="685.30" y="210.18" width="12.70" height="2.00" fill="#dddd22" /><rect x="672.00" y="207.33" width="12.30" height="2.00" fill="#dddd22" /><rect x="685.30" y="207.33" width="12.70" height="2.00" fill="#dddd22" /><rect x="672.00" y="204.48" width="12.30" height="2.00" fill="#dddd22" /><rect x="685.30" y="204.48" width="12.70" height="2.00" fill="#dddd22" /><rect x="672.00" y="201.62" width="12.30" height="2.00" fill="#dddd22" /><rect x="685.30" y="201.62" width="12.70" height="2.00" fill="#dddd22" /><rect x="672.00" y="198.77" width="12.30" height="2.00" fill="#dddd22" /><rect x="685.30" y="198.77" width="12.70" height="2.00" fill="#dddd22" /><rect x="672.00" y="195.91" width="12.30" height="2.00" fill="#dddd22" /><rect x="685.30" y="195.91" width="12.70" height="2.00" fill="#dddd22" /><rect x="672.00" y="193.06" width="12.30" height="2.00" fill="#dddd22" /><rect x="685.30" y="193.06" width="12.70" height="2.00" fill="#dddd22" /><rect x="672.00" y="190.21" width="12.30" height="2.00" fill="#dddd22" /><rect x="685.30" y="190.21" width="12.70" height="2.00" fill="#dddd22" /><rect x="672.00" y="187.35" width="12.30" height="2.00" fill="#dddd22" /><rect x="685.30" y="187.35" width="12.70" height="2.00" fill="#dddd22" /><rect x="672.00" y="184.50" width="12.30" height="2.00" fill="#dddd22" /><rect x="685.30" y="184.50" width="12.70" height="2.00" fill="#dddd22" /><rect x="672.00" y="181.64" width="12.30" height="2.11" fill="#636367" /><rect x="685.30" y="181.64" width="12.70" height="2.11" fill="#636367" /><rect x="672.00" y="178.79" width="12.30" height="2.11" fill="#636367" /><rect x="685.30" y="178.79" width="12.70" height="2.11" fill="#636367" /><rect x="672.00" y="175.94" width="12.30" height="2.11" fill="#636367" /><rect x="685.30" y="175.94" width="12.70" height="2.11" fill="#636367" /><rect x="672.00" y="173.08" width="12.30" height="2.11" fill="#636367" /><rect x="685.30" y="173.08" width="12.70" height="2.11" fill="#636367" /><rect x="672.00" y="170.23" width="12.30" height="2.11" fill="#636367" /><rect x="685.30" y="170.23" width="12.70" height="2.11" fill="#636367" /><rect x="672.00" y="167.37" width="12.30" height="2.11" fill="#636367" /><rect x="685.30" y="167.37" width="12.70" height="2.11" fill="#636367" /><rect x="672.00" y="164.52" width="12.30" height="2.11" fill="#636367" /><rect x="685.30" y="164.52" width="12.70" height="2.11" fill="#636367" /><rect x="672.00" y="161.66" width="12.30" height="2.11" fill="#636367" /><rect x="685.30" y="161.66" width="12.70" height="2.11" fill="#636367" /><rect x="672.00" y="158.81" width="12.30" height="2.11" fill="#636367" /><rect x="685.30" y="158.81" width="12.70" height="2.11" fill="#636367" /><rect x="672.00" y="155.96" width="12.30" height="2.11" fill="#636367" /><rect x="685.30" y="155.96" width="12.70" height="2.11" fill="#636367" /><rect x="672.00" y="153.10" width="12.30" height="2.11" fill="#636367" /><rect x="685.30" y="153.10" width="12.70" height="2.11" fill="#636367" /><rect x="672.00" y="150.25" width="12.30" height="2.11" fill="#636367" /><rect x="685.30" y="150.25" width="12.70" height="2.11" fill="#636367" /><rect x="672.00" y="147.39" width="12.30" height="2.11" fill="#636367" /><rect x="685.30" y="147.39" width="12.70" height="2.11" fill="#636367" /><rect x="672.00" y="144.54" width="12.30" height="2.11" fill="#636367" /><rect x="685.30" y="144.54" width="12.70" height="2.11" fill="#636367" /><rect x="672.00" y="141.69" width="12.30" height="2.11" fill="#636367" /><rect x="685.30" y="141.69" width="12.70" height="2.11" fill="#636367" /><rect x="672.00" y="138.83" width="12.30" height="2.11" fill="#636367" /><rect x="685.30" y="138.83" width="12.70" height="2.11" fill="#636367" /><rect x="672.00" y="135.98" width="12.30" height="2.11" fill="#636367" /><rect x="685.30" y="135.98" width="12.70" height="2.11" fill="#636367" /><rect x="672.00" y="133.12" width="12.30" height="2.11" fill="#636367" /><rect x="685.30" y="133.12" width="12.70" height="2.11" fill="#636367" /><rect x="672.00" y="130.27" width="12.30" height="2.11" fill="#636367" /><rect x="685.30" y="130.27" width="12.70" height="2.11" fill="#636367" /><rect x="672.00" y="127.42" width="12.30" height="2.11" fill="#636367" /><rect x="685.30" y="127.42" width="12.70" height="2.11" fill="#636367" /><rect x="672.00" y="124.56" width="12.30" height="2.11" fill="#636367" /><rect x="685.30" y="124.56" width="12.70" height="2.11" fill="#636367" /><rect x="672.00" y="121.71" width="12.30" height="2.11" fill="#636367" /><rect x="685.30" y="121.71" width="12.70" height="2.11" fill="#636367" /><rect x="672.00" y="118.85" width="12.30" height="2.11" fill="#636367" /><rect x="685.30" y="118.85" width="12.70" height="2.11" fill="#636367" /><rect x="672.00" y="116.00" width="12.30" height="2.11" fill="#636367" /><rect x="685.30" y="116.00" width="12.70" height="2.11" fill="#636367" /><rect x="644.60" y="367.66" width="26.40" height="1.92" fill="#dddd22" /><rect x="672.00" y="367.66" width="26.30" height="1.92" fill="#dddd22" /><rect x="644.60" y="364.92" width="26.40" height="1.92" fill="#dddd22" /><rect x="672.00" y="364.92" width="26.30" height="1.92" fill="#dddd22" /><rect x="644.60" y="362.18" width="26.40" height="1.92" fill="#dddd22" /><rect x="672.00" y="362.18" width="26.30" height="1.92" fill="#dddd22" /><rect x="644.60" y="359.44" width="26.40" height="1.92" fill="#dddd22" /><rect x="672.00" y="359.44" width="26.30" height="1.92" fill="#dddd22" /><rect x="644.60" y="356.70" width="26.40" height="1.92" fill="#dddd22" /><rect x="672.00" y="356.70" width="26.30" height="1.92" fill="#dddd22" /><rect x="644.60" y="353.96" width="26.40" height="1.92" fill="#dddd22" /><rect x="672.00" y="353.96" width="26.30" height="1.92" fill="#dddd22" /><rect x="644.60" y="351.22" width="26.40" height="1.92" fill="#dddd22" /><rect x="672.00" y="351.22" width="26.30" height="1.92" fill="#dddd22" /><rect x="644.60" y="348.48" width="26.40" height="1.92" fill="#dddd22" /><rect x="672.00" y="348.48" width="26.30" height="1.92" fill="#dddd22" /><rect x="644.60" y="345.74" width="26.40" height="1.92" fill="#dddd22" /><rect x="672.00" y="345.74" width="26.30" height="1.92" fill="#dddd22" /><rect x="644.60" y="343.00" width="26.40" height="1.92" fill="#dddd22" /><rect x="672.00" y="343.00" width="26.30" height="1.92" fill="#dddd22" /><rect x="644.60" y="340.26" width="26.40" height="1.92" fill="#dddd22" /><rect x="672.00" y="340.26" width="26.30" height="1.92" fill="#dddd22" /><rect x="644.60" y="337.52" width="26.40" height="1.92" fill="#dddd22" /><rect x="672.00" y="337.52" width="26.30" height="1.92" fill="#dddd22" /><rect x="644.60" y="334.78" width="26.40" height="1.92" fill="#dddd22" /><rect x="672.00" y="334.78" width="26.30" height="1.92" fill="#dddd22" /><rect x="644.60" y="332.04" width="26.40" height="1.92" fill="#dddd22" /><rect x="672.00" y="332.04" width="26.30" height="1.92" fill="#dddd22" /><rect x="644.60" y="329.30" width="26.40" height="1.92" fill="#dddd22" /><rect x="672.00" y="329.30" width="26.30" height="1.92" fill="#dddd22" /><rect x="644.60" y="326.56" width="26.40" height="1.92" fill="#dddd22" /><rect x="672.00" y="326.56" width="26.30" height="1.92" fill="#dddd22" /><rect x="644.60" y="323.82" width="26.40" height="1.92" fill="#dddd22" /><rect x="672.00" y="323.82" width="26.30" height="1.92" fill="#dddd22" /><rect x="644.60" y="321.08" width="26.40" height="1.92" fill="#dddd22" /><rect x="672.00" y="321.08" width="26.30" height="1.92" fill="#dddd22" /><rect x="644.60" y="318.34" width="26.40" height="1.92" fill="#dddd22" /><rect x="672.00" y="318.34" width="26.30" height="1.92" fill="#dddd22" /><rect x="644.60" y="315.60" width="26.40" height="1.92" fill="#dddd22" /><rect x="672.00" y="315.60" width="26.30" height="1.92" fill="#dddd22" /><rect x="644.60" y="312.86" width="26.40" height="1.92" fill="#dddd22" /><rect x="672.00" y="312.86" width="26.30" height="1.92" fill="#dddd22" /><rect x="644.60" y="310.12" width="26.40" height="1.92" fill="#dddd22" /><rect x="672.00" y="310.12" width="26.30" height="1.92" fill="#dddd22" /><rect x="644.60" y="307.38" width="26.40" height="1.92" fill="#dddd22" /><rect x="672.00" y="307.38" width="26.30" height="1.92" fill="#dddd22" /><rect x="644.60" y="304.64" width="26.40" height="1.92" fill="#dddd22" /><rect x="672.00" y="304.64" width="26.30" height="1.92" fill="#dddd22" /><rect x="644.60" y="301.90" width="26.40" height="1.92" fill="#dddd22" /><rect x="672.00" y="301.90" width="26.30" height="1.92" fill="#dddd22" /><rect x="644.60" y="299.16" width="26.40" height="1.92" fill="#dddd22" /><rect x="672.00" y="299.16" width="26.30" height="1.92" fill="#dddd22" /><rect x="644.60" y="296.42" width="26.40" height="1.92" fill="#dddd22" /><rect x="672.00" y="296.42" width="26.30" height="1.92" fill="#dddd22" /><rect x="644.60" y="293.68" width="26.40" height="2.03" fill="#636367" /><rect x="672.00" y="293.68" width="26.30" height="2.03" fill="#636367" /><rect x="644.60" y="290.94" width="26.40" height="2.03" fill="#636367" /><rect x="672.00" y="290.94" width="26.30" height="2.03" fill="#636367" /><rect x="644.60" y="288.20" width="26.40" height="2.03" fill="#636367" /><rect x="672.00" y="288.20" width="26.30" height="2.03" fill="#636367" />
</svg>
<svg width="960" height="624" style="position:absolute;left:0;top:0">
<circle cx="14.2" cy="13.2" r="6.3" fill="none" stroke="#333" stroke-width="1.6"/>
<path d="M9.5,14.5 L12,14.5 L13.2,10.2 L14.6,16 L15.8,11.5 L18.5,14.2" fill="none" stroke="#333" stroke-width="1.1"/>
<line x1="848" y1="13.5" x2="858" y2="13.5" stroke="#1a1a1a" stroke-width="1"/>
<rect x="890.5" y="9.5" width="8.5" height="8" fill="none" stroke="#1a1a1a" stroke-width="1"/>
<path d="M933,9 L942,18 M942,9 L933,18" stroke="#1a1a1a" stroke-width="1.1"/>
<rect x="940" y="48" width="14" height="13.5" fill="#fafafa"/>
<path d="M942.5,55 L949.5,55" stroke="#2a2a2a" stroke-width="2.2"/>
<path d="M947.3,51 L952.3,55 L947.3,59 Z" fill="#2a2a2a"/>
<path d="M609,118.5 L612,120.5 L609,122.5" fill="none" stroke="#b8b8b8" stroke-width="0.9"/>
<circle cx="614.9" cy="120.9" r="2" fill="#dc7a3c"/>
<path d="M912,420 L915,422 L912,424" fill="none" stroke="#b8b8b8" stroke-width="0.9"/>
<circle cx="918.6" cy="422.6" r="2" fill="#dc7a3c"/>
<rect x="955" y="614" width="1.2" height="1.2" fill="#a8a8a8"/>
<rect x="955" y="617" width="1.2" height="1.2" fill="#a8a8a8"/><rect x="952" y="617" width="1.2" height="1.2" fill="#a8a8a8"/>
<rect x="955" y="620" width="1.2" height="1.2" fill="#a8a8a8"/><rect x="952" y="620" width="1.2" height="1.2" fill="#a8a8a8"/><rect x="949" y="620" width="1.2" height="1.2" fill="#a8a8a8"/>
</svg>
<div class="t" style="left:40.65px;top:8.67px;font-size:12.2px;line-height:12.2px;color:#2a2a2a;font-weight:700;transform:scaleX(0.8492);">srv-dev-012.mycorp.com</div><div class="t" style="left:175.15px;top:8.67px;font-size:12.2px;line-height:12.2px;color:#2a2a2a;font-weight:400;transform:scaleX(0.9066);">- Task Manager</div><div class="t" style="left:3.69px;top:31.27px;font-size:11.5px;line-height:11.5px;color:#262626;font-weight:400;transform:scaleX(0.9886);">Controls</div><div class="t" style="left:57.20px;top:31.27px;font-size:11.5px;line-height:11.5px;color:#262626;font-weight:400;transform:scaleX(0.9632);">Update Speed</div><div class="t" style="left:139.89px;top:31.27px;font-size:11.5px;line-height:11.5px;color:#262626;font-weight:400;transform:scaleX(0.9564);">Keep Graph History For</div><div class="t" style="left:20.02px;top:75.15px;font-size:14px;line-height:14px;color:#cacaca;font-weight:400;transform:scaleX(0.9255);-webkit-text-stroke:0.3px #2d2d30;">Users</div><div class="t" style="left:70.42px;top:75.15px;font-size:14px;line-height:14px;color:#cacaca;font-weight:400;transform:scaleX(0.9033);-webkit-text-stroke:0.3px #2d2d30;">Processes</div><div class="t" style="left:145.62px;top:75.15px;font-size:14px;line-height:14px;color:#cacaca;font-weight:400;transform:scaleX(0.9822);-webkit-text-stroke:0.3px #2d2d30;">Top 5</div><div class="t" style="left:195.72px;top:75.15px;font-size:14px;line-height:14px;color:#eef4fa;font-weight:400;transform:scaleX(0.9636);">Performance</div><div class="t" style="left:289.42px;top:75.15px;font-size:14px;line-height:14px;color:#cacaca;font-weight:400;transform:scaleX(1.0073);-webkit-text-stroke:0.3px #2d2d30;">Networking</div><div class="t" style="left:376.32px;top:75.15px;font-size:14px;line-height:14px;color:#cacaca;font-weight:400;transform:scaleX(0.9501);-webkit-text-stroke:0.3px #2d2d30;">Startup Programs</div><div class="t" style="left:697.76px;top:73.84px;font-size:12px;line-height:12px;color:#5e5e62;font-weight:400;transform:scaleX(0.9708);">Search</div><div class="t" style="left:819.02px;top:70.65px;font-size:14px;line-height:14px;color:#f0f0f0;font-weight:400;transform:scaleX(1.0290);">All Time</div><div class="t" style="left:898.72px;top:70.65px;font-size:14px;line-height:14px;color:#f0f0f0;font-weight:400;transform:scaleX(0.9707);">Pause</div><div class="t" style="left:33.12px;top:117.42px;font-size:12.5px;line-height:12.5px;color:#ececec;font-weight:700;transform:scaleX(1.0260);">CPU Activity</div><div class="t" style="left:530.25px;top:119.14px;font-size:10.7px;line-height:10.7px;color:#ececec;font-weight:700;transform:scaleX(1.0224);">All Instances</div><div class="t" style="left:46.60px;top:137.34px;font-size:10px;line-height:10px;color:#e2e2e2;font-weight:400;transform:scaleX(1.0126);">100%</div><div class="t" style="left:49.60px;top:175.34px;font-size:10px;line-height:10px;color:#e2e2e2;font-weight:400;transform:scaleX(1.0642);">50%</div><div class="t" style="left:64.30px;top:212.34px;font-size:10px;line-height:10px;color:#e2e2e2;font-weight:400;transform:scaleX(1.2764);">0</div><div class="t" style="left:48.90px;top:227.53px;font-size:10px;line-height:10px;color:#e2e2e2;font-weight:400;transform:scaleX(0.9965);">15:32:52</div><div class="t" style="left:310.30px;top:227.53px;font-size:10px;line-height:10px;color:#e2e2e2;font-weight:400;transform:scaleX(0.9913);">15:33:32</div><div class="t" style="left:571.60px;top:227.53px;font-size:10px;line-height:10px;color:#e2e2e2;font-weight:400;transform:scaleX(0.9836);">15:33:53</div><div class="t" style="left:669.76px;top:227.54px;font-size:12px;line-height:12px;color:#d8d8d8;font-weight:400;transform:scaleX(1.0936);">35 %</div><div class="t" style="left:735.04px;top:122.76px;font-size:10.8px;line-height:10.8px;color:#dedede;font-weight:400;transform:scaleX(0.8860);-webkit-text-stroke:0.3px #2d2d30;">Cores</div><div class="t" style="left:828.84px;top:122.36px;font-size:10.8px;line-height:10.8px;color:#dedede;font-weight:400;transform:scaleX(0.8675);-webkit-text-stroke:0.3px #2d2d30;">Processes</div><div class="t" style="left:734.50px;top:136.94px;font-size:18.5px;line-height:18.5px;color:#dadada;font-weight:400;transform:scaleX(0.8825);-webkit-text-stroke:0.55px #2d2d30;">12</div><div class="t" style="left:828.71px;top:136.64px;font-size:18.5px;line-height:18.5px;color:#dadada;font-weight:400;transform:scaleX(0.9963);-webkit-text-stroke:0.55px #2d2d30;">268</div><div class="t" style="left:735.54px;top:168.76px;font-size:10.8px;line-height:10.8px;color:#dedede;font-weight:400;transform:scaleX(0.8944);-webkit-text-stroke:0.3px #2d2d30;">Threads</div><div class="t" style="left:827.74px;top:168.76px;font-size:10.8px;line-height:10.8px;color:#dedede;font-weight:400;transform:scaleX(0.8966);-webkit-text-stroke:0.3px #2d2d30;">Handles</div><div class="t" style="left:734.71px;top:183.34px;font-size:18.5px;line-height:18.5px;color:#dadada;font-weight:400;transform:scaleX(0.8998);-webkit-text-stroke:0.55px #2d2d30;">4,145</div><div class="t" style="left:827.21px;top:183.34px;font-size:18.5px;line-height:18.5px;color:#dadada;font-weight:400;transform:scaleX(0.9107);-webkit-text-stroke:0.55px #2d2d30;">1,546,846</div><div class="t" style="left:735.24px;top:214.66px;font-size:10.8px;line-height:10.8px;color:#dedede;font-weight:400;transform:scaleX(0.9496);-webkit-text-stroke:0.3px #2d2d30;">Up time</div><div class="t" style="left:734.71px;top:228.74px;font-size:18.5px;line-height:18.5px;color:#dadada;font-weight:400;transform:scaleX(0.9242);-webkit-text-stroke:0.55px #2d2d30;">11d 0h 33m 29s</div><div class="t" style="left:33.12px;top:267.22px;font-size:12.5px;line-height:12.5px;color:#ececec;font-weight:700;transform:scaleX(1.0136);">Memory Activity</div><div class="t" style="left:33.80px;top:286.44px;font-size:10px;line-height:10px;color:#e2e2e2;font-weight:400;transform:scaleX(0.9851);">127.99 GB</div><div class="t" style="left:36.50px;top:324.54px;font-size:10px;line-height:10px;color:#e2e2e2;font-weight:400;transform:scaleX(1.0221);">63.99 GB</div><div class="t" style="left:72.80px;top:362.14px;font-size:10px;line-height:10px;color:#e2e2e2;font-weight:400;transform:scaleX(1.2404);">0</div><div class="t" style="left:38.30px;top:376.94px;font-size:10px;line-height:10px;color:#e2e2e2;font-weight:400;">15:32:47</div><div class="t" style="left:317.30px;top:376.94px;font-size:10px;line-height:10px;color:#e2e2e2;font-weight:400;transform:scaleX(0.9913);">15:33:31</div><div class="t" style="left:594.30px;top:377.14px;font-size:10px;line-height:10px;color:#e2e2e2;font-weight:400;transform:scaleX(0.9785);">15:33:51</div><div class="t" style="left:640.34px;top:377.59px;font-size:12.3px;line-height:12.3px;color:#dcdcdc;font-weight:400;transform:scaleX(1.0134);">117.47 GB</div><div class="t" style="left:735.44px;top:290.16px;font-size:10.8px;line-height:10.8px;color:#dedede;font-weight:400;transform:scaleX(0.9525);-webkit-text-stroke:0.3px #2d2d30;">Total</div><div class="t" style="left:827.94px;top:290.16px;font-size:10.8px;line-height:10.8px;color:#dedede;font-weight:400;transform:scaleX(0.9594);-webkit-text-stroke:0.3px #2d2d30;">In use</div><div class="t" style="left:734.91px;top:307.14px;font-size:18.5px;line-height:18.5px;color:#dadada;font-weight:400;transform:scaleX(0.8825);-webkit-text-stroke:0.55px #2d2d30;">127.99 GB</div><div class="t" style="left:827.41px;top:307.14px;font-size:18.5px;line-height:18.5px;color:#dadada;font-weight:400;transform:scaleX(0.8561);-webkit-text-stroke:0.55px #2d2d30;">117.47 GB</div><div class="t" style="left:735.44px;top:340.66px;font-size:10.8px;line-height:10.8px;color:#dedede;font-weight:400;transform:scaleX(0.9050);-webkit-text-stroke:0.3px #2d2d30;">Commited</div><div class="t" style="left:734.91px;top:355.84px;font-size:18.5px;line-height:18.5px;color:#dadada;font-weight:400;transform:scaleX(0.8834);-webkit-text-stroke:0.55px #2d2d30;">119.94 GB/152.40</div><div class="t" style="left:33.12px;top:418.42px;font-size:12.5px;line-height:12.5px;color:#ececec;font-weight:700;transform:scaleX(1.0191);">Disk Activity</div><div class="t" style="left:833.85px;top:420.54px;font-size:10.7px;line-height:10.7px;color:#ececec;font-weight:700;transform:scaleX(1.0269);">All Instances</div><div class="t" style="left:43.31px;top:442.03px;font-size:11.3px;line-height:11.3px;color:#ececec;font-weight:700;transform:scaleX(0.9370);">D: - free space: 87%</div><div class="t" style="left:45.80px;top:456.64px;font-size:10px;line-height:10px;color:#e2e2e2;font-weight:400;transform:scaleX(1.0448);">2%</div><div class="t" style="left:45.80px;top:485.74px;font-size:10px;line-height:10px;color:#e2e2e2;font-weight:400;transform:scaleX(1.0448);">1%</div><div class="t" style="left:52.80px;top:514.13px;font-size:10px;line-height:10px;color:#e2e2e2;font-weight:400;transform:scaleX(1.4562);">0</div><div class="t" style="left:47.00px;top:529.53px;font-size:10px;line-height:10px;color:#e2e2e2;font-weight:400;transform:scaleX(0.9965);">15:33:59</div><div class="t" style="left:171.21px;top:442.03px;font-size:11.3px;line-height:11.3px;color:#ececec;font-weight:700;transform:scaleX(0.9435);">C: - free space: 29%</div><div class="t" style="left:174.50px;top:456.64px;font-size:10px;line-height:10px;color:#d9634a;font-weight:400;transform:scaleX(1.0292);">39%</div><div class="t" style="left:174.50px;top:485.74px;font-size:10px;line-height:10px;color:#e2e2e2;font-weight:400;transform:scaleX(1.0292);">19%</div><div class="t" style="left:187.00px;top:514.13px;font-size:10px;line-height:10px;color:#e2e2e2;font-weight:400;transform:scaleX(1.4562);">0</div><div class="t" style="left:174.40px;top:529.53px;font-size:10px;line-height:10px;color:#e2e2e2;font-weight:400;transform:scaleX(0.9965);">15:33:59</div><div class="t" style="left:304.21px;top:442.03px;font-size:11.3px;line-height:11.3px;color:#ececec;font-weight:700;transform:scaleX(0.9389);">I: - free space: 14%</div><div class="t" style="left:302.90px;top:456.64px;font-size:10px;line-height:10px;color:#e2e2e2;font-weight:400;transform:scaleX(1.0087);">100%</div><div class="t" style="left:305.90px;top:485.74px;font-size:10px;line-height:10px;color:#e2e2e2;font-weight:400;transform:scaleX(1.1391);">50%</div><div class="t" style="left:320.60px;top:514.13px;font-size:10px;line-height:10px;color:#e2e2e2;font-weight:400;transform:scaleX(1.4562);">0</div><div class="t" style="left:302.60px;top:529.53px;font-size:10px;line-height:10px;color:#e2e2e2;font-weight:400;transform:scaleX(0.9965);">15:33:59</div><div class="t" style="left:428.91px;top:442.03px;font-size:11.3px;line-height:11.3px;color:#ececec;font-weight:700;transform:scaleX(0.9312);">F: - free space: 38%</div><div class="t" style="left:430.50px;top:456.64px;font-size:10px;line-height:10px;color:#e2e2e2;font-weight:400;transform:scaleX(1.0448);">2%</div><div class="t" style="left:430.50px;top:485.74px;font-size:10px;line-height:10px;color:#e2e2e2;font-weight:400;transform:scaleX(1.0448);">1%</div><div class="t" style="left:437.50px;top:514.13px;font-size:10px;line-height:10px;color:#e2e2e2;font-weight:400;transform:scaleX(1.4562);">0</div><div class="t" style="left:430.90px;top:529.53px;font-size:10px;line-height:10px;color:#e2e2e2;font-weight:400;transform:scaleX(0.9965);">15:33:59</div><div class="t" style="left:555.11px;top:442.03px;font-size:11.3px;line-height:11.3px;color:#ececec;font-weight:700;transform:scaleX(0.9436);">HarddiskVolume4 ...</div><div class="t" style="left:559.00px;top:456.64px;font-size:10px;line-height:10px;color:#e2e2e2;font-weight:400;transform:scaleX(1.0448);">2%</div><div class="t" style="left:559.00px;top:485.74px;font-size:10px;line-height:10px;color:#e2e2e2;font-weight:400;transform:scaleX(1.0448);">1%</div><div class="t" style="left:566.00px;top:514.13px;font-size:10px;line-height:10px;color:#e2e2e2;font-weight:400;transform:scaleX(1.4562);">0</div><div class="t" style="left:558.50px;top:529.53px;font-size:10px;line-height:10px;color:#e2e2e2;font-weight:400;transform:scaleX(0.9965);">15:33:59</div><div class="t" style="left:685.71px;top:442.03px;font-size:11.3px;line-height:11.3px;color:#ececec;font-weight:700;transform:scaleX(0.9366);">J: - free space: 59%</div><div class="t" style="left:686.70px;top:456.64px;font-size:10px;line-height:10px;color:#e2e2e2;font-weight:400;transform:scaleX(1.0448);">2%</div><div class="t" style="left:686.70px;top:485.74px;font-size:10px;line-height:10px;color:#e2e2e2;font-weight:400;transform:scaleX(1.0448);">1%</div><div class="t" style="left:693.70px;top:514.13px;font-size:10px;line-height:10px;color:#e2e2e2;font-weight:400;transform:scaleX(1.4562);">0</div><div class="t" style="left:686.70px;top:529.53px;font-size:10px;line-height:10px;color:#e2e2e2;font-weight:400;transform:scaleX(0.9965);">15:33:59</div><div class="t" style="left:812.21px;top:442.03px;font-size:11.3px;line-height:11.3px;color:#ececec;font-weight:700;transform:scaleX(0.9342);">K: - free space: 28%</div><div class="t" style="left:815.10px;top:456.64px;font-size:10px;line-height:10px;color:#d9634a;font-weight:400;transform:scaleX(1.0448);">2%</div><div class="t" style="left:815.10px;top:485.74px;font-size:10px;line-height:10px;color:#e2e2e2;font-weight:400;transform:scaleX(1.0448);">1%</div><div class="t" style="left:822.10px;top:514.13px;font-size:10px;line-height:10px;color:#e2e2e2;font-weight:400;transform:scaleX(1.4562);">0</div><div class="t" style="left:815.50px;top:529.53px;font-size:10px;line-height:10px;color:#e2e2e2;font-weight:400;transform:scaleX(0.9965);">15:33:59</div><div class="t" style="left:811.32px;top:556.25px;font-size:14px;line-height:14px;color:#f0f0f0;font-weight:400;transform:scaleX(0.9667);">Reset Counters</div><div class="t" style="left:1.69px;top:611.57px;font-size:11.5px;line-height:11.5px;color:#1e1e1e;font-weight:400;transform:scaleX(0.9063);">Processes: 268</div><div class="t" style="left:552.70px;top:611.57px;font-size:11.5px;line-height:11.5px;color:#1e1e1e;font-weight:400;transform:scaleX(0.9321);">CPU Usage: 35 % Memory Usage: 92 % Disk Usage: 100 % Network Usage: 0 %</div>
</body></html>
